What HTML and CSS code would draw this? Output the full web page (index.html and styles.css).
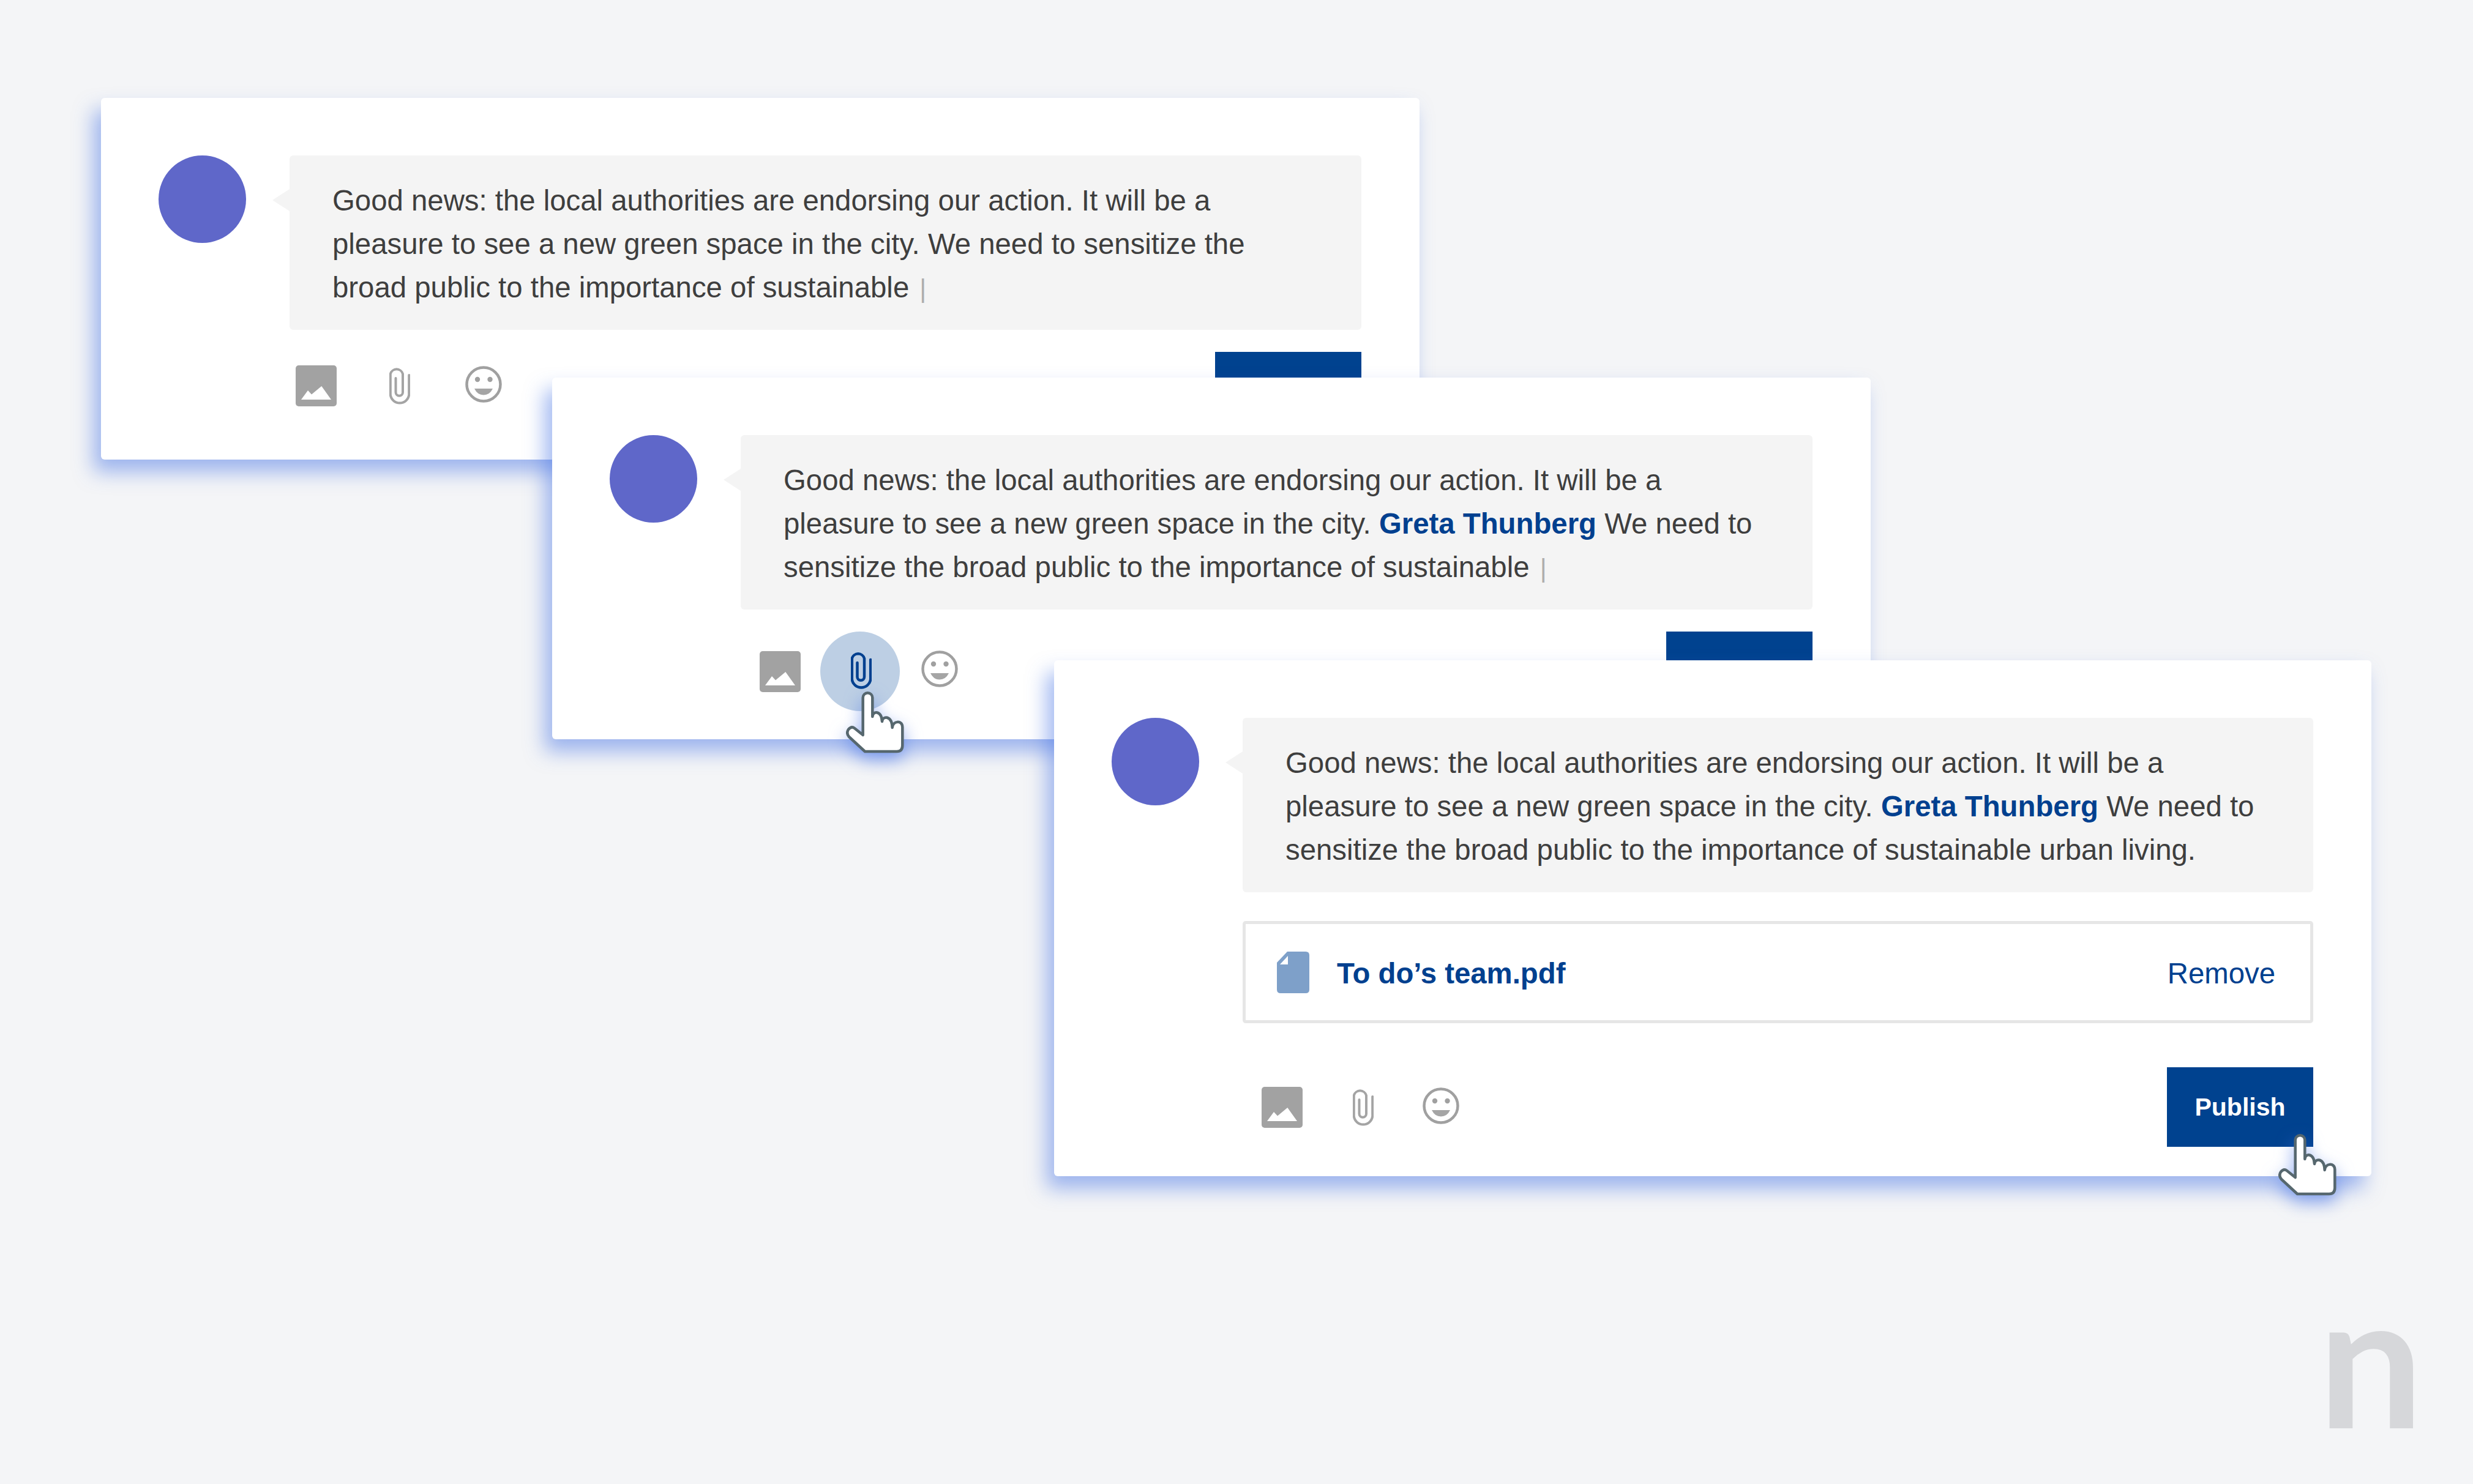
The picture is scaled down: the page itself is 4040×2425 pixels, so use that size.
FILE: index.html
```
<!DOCTYPE html>
<html lang="en">
<head>
<meta charset="utf-8">
<title>Comment composer states</title>
<link rel="stylesheet" href="styles.css">
</head>
<body>
<svg class="defs" width="0" height="0" aria-hidden="true">
  <symbol id="i-image" viewBox="0 0 67 67"><rect width="67" height="67" rx="5" fill="#a2a2a2"/><path d="M9 56 20 41 26 47.500 42.300 34 58 56Z" fill="#fff"/></symbol>
  <symbol id="i-clip" viewBox="0 0 34 66"><path d="M10.500 21V44A5.750 5.750 0 0 0 22 44V14A10.500 10.500 0 0 0 1.800 14V48A15.300 15.300 0 0 0 32.200 48V16" fill="none" stroke="currentColor" stroke-linecap="round"/></symbol>
  <symbol id="i-smile" viewBox="0 0 60 60"><circle cx="30" cy="30" r="27.500" fill="none" stroke="#a0a0a0" stroke-width="4.500"/><circle cx="20" cy="22" r="4.200" fill="#a0a0a0"/><circle cx="40.500" cy="22" r="4.200" fill="#a0a0a0"/><path d="M15 37H45Q40 47.500 30 47.500T15 37Z" fill="#a5a5a5"/></symbol>
  <symbol id="i-hand" viewBox="0 0 96 104"><path d="M27.700 73V12A7.800 7.800 0 0 1 43.300 12V43C44 33 58 33 59 51C60 41 75 41 75.700 61C76 50 92 48 92.300 60V90Q92.300 100 83 100H31L5 76Q0 70 4 64Q9 58 14 62Z" fill="#fff" stroke="#56676e" stroke-width="4.500" stroke-linejoin="round"/></symbol>
</svg>
<main class="stage">
  <article class="card card-a">
    <div class="avatar"></div>
    <div class="body">
      <p class="bubble">Good news: the local authorities are endorsing our action. It will be a<br>pleasure to see a new green space in the city. We need to sensitize the<br>broad public to the importance of sustainable <span class="caret">|</span></p>
      <div class="footer">
        <div class="tools">
          <svg class="icon-image"><use href="#i-image"/></svg>
          <svg class="icon-clip"><use href="#i-clip"/></svg>
          <svg class="icon-smile"><use href="#i-smile"/></svg>
        </div>
        <button class="publish">Publish</button>
      </div>
    </div>
  </article>

  <article class="card card-b">
    <div class="avatar"></div>
    <div class="body">
      <p class="bubble">Good news: the local authorities are endorsing our action. It will be a<br>pleasure to see a new green space in the city. <strong class="mention">Greta Thunberg</strong> We need to<br>sensitize the broad public to the importance of sustainable <span class="caret">|</span></p>
      <div class="footer">
        <div class="tools">
          <svg class="icon-image"><use href="#i-image"/></svg>
          <span class="clip-hover"><svg class="icon-clip"><use href="#i-clip"/></svg></span>
          <svg class="icon-smile"><use href="#i-smile"/></svg>
        </div>
        <button class="publish">Publish</button>
      </div>
    </div>
  </article>

  <article class="card card-c">
    <div class="avatar"></div>
    <div class="body">
      <p class="bubble">Good news: the local authorities are endorsing our action. It will be a<br>pleasure to see a new green space in the city. <strong class="mention">Greta Thunberg</strong> We need to<br>sensitize the broad public to the importance of sustainable urban living.</p>
      <div class="attachment">
        <svg class="file" viewBox="0 0 53 68"><path d="M17 0H47Q53 0 53 6V62Q53 68 47 68H6Q0 68 0 62V18Z" fill="#7ea0c9"/><path d="M18 7V21H5Z" fill="#fff"/></svg>
        <strong class="file-name">To do’s team.pdf</strong>
        <span class="remove">Remove</span>
      </div>
      <div class="footer">
        <div class="tools">
          <svg class="icon-image"><use href="#i-image"/></svg>
          <svg class="icon-clip"><use href="#i-clip"/></svg>
          <svg class="icon-smile"><use href="#i-smile"/></svg>
        </div>
        <button class="publish">Publish</button>
      </div>
    </div>
  </article>

  <svg class="hand hand-a"><use href="#i-hand"/></svg>
  <svg class="hand hand-b"><use href="#i-hand"/></svg>
  <div class="logo">n</div>
</main>
</body>
</html>
```
FILE: styles.css
```
* { box-sizing: border-box; }
html, body { margin: 0; padding: 0; }
body {
  background: #f4f5f7;
  font-family: "Liberation Sans", Arial, sans-serif;
  color: #3e3e3e;
}
.defs { position: absolute; }
.stage {
  position: relative;
  width: 4040px;
  height: 2425px;
  overflow: hidden;
}
.card {
  position: absolute;
  display: flex;
  gap: 71px;
  padding: 94px 95px 46px 94px;
  background: #fff;
  border-radius: 6px;
  box-shadow: -12px 20px 32px rgba(70, 115, 230, .5);
}
.card-a { left: 165px; top: 160px; width: 2154px; }
.card-b { left: 902px; top: 617px; width: 2154px; }
.card-c { left: 1722px; top: 1079px; width: 2152px; padding-bottom: 48px; }
.avatar {
  flex: none;
  width: 143px;
  height: 143px;
  border-radius: 50%;
  background: #5f67c9;
}
.body { flex: 1; min-width: 0; }
.bubble {
  position: relative;
  margin: 0;
  padding: 38px 70px 32px;
  background: #f4f4f4;
  border-radius: 6px;
  font-size: 47.350px;
  line-height: 71px;
  white-space: nowrap;
}
.card-c .bubble { padding-bottom: 34px; }
.bubble::before {
  content: "";
  position: absolute;
  left: -28px;
  top: 55px;
  border: 18px solid transparent;
  border-left: 0;
  border-right: 28px solid #f4f4f4;
}
.caret { margin-left: 4px; color: #adadad; font-size: 42px; }
.mention { color: #00408f; font-weight: 700; }
.footer {
  display: flex;
  justify-content: space-between;
  align-items: stretch;
  margin-top: 36px;
}
.tools { display: flex; align-items: center; }
.publish {
  width: 239px;
  height: 130px;
  padding: 0;
  border: 0;
  border-radius: 0;
  background: #00428f;
  color: #fff;
  font: 700 41px "Liberation Sans", Arial, sans-serif;
}
.icon-image { width: 67px; height: 67px; flex: none; }
.icon-clip { width: 34px; height: 66px; flex: none; color: #a4a4a4; stroke-width: 4px; }
.icon-smile { width: 60px; height: 60px; flex: none; margin-bottom: 4px; }

.card-a .tools { padding-left: 10px; padding-bottom: 20px; }
.card-a .icon-clip { margin-left: 86px; }
.card-a .icon-smile { margin-left: 90px; }

.card-b .tools { padding-left: 31px; }
.clip-hover {
  display: flex;
  align-items: center;
  justify-content: center;
  width: 130px;
  height: 130px;
  margin-left: 32px;
  border-radius: 50%;
  background: #bdcfe4;
}
.clip-hover .icon-clip { color: #00408f; margin-bottom: 5px; margin-left: 4px; stroke-width: 4.500px; }
.card-b .icon-smile { margin-left: 35px; margin-bottom: 8px; }

.card-c .tools { padding-left: 31px; }
.card-c .icon-clip { margin-left: 82px; }
.card-c .icon-smile { margin-left: 80px; }

.attachment {
  display: flex;
  align-items: center;
  height: 167px;
  margin: 47px 0 72px;
  padding: 0 57px 0 51px;
  border: 5px solid #e6e6e6;
  border-radius: 5px;
}
.card-c .footer { margin-top: 0; }
.file { width: 53px; height: 68px; flex: none; }
.file-name { margin: 3px 0 0 45px; color: #00408f; font-size: 47.350px; font-weight: 700; }
.remove { margin: 3px 0 0 auto; color: #00408f; font-size: 47.350px; }

.hand {
  position: absolute;
  width: 96px;
  height: 104px;
  filter: drop-shadow(0 12px 14px rgba(70, 115, 230, .6));
}
.hand-a { left: 1382px; top: 1128px; }
.hand-b { left: 3722px; top: 1851px; }

.logo {
  position: absolute;
  left: 3787px;
  top: 2064px;
  font-family: Lato, sans-serif;
  font-size: 305px;
  font-weight: 700;
  line-height: 305px;
  color: #d6d7da;
}
```
